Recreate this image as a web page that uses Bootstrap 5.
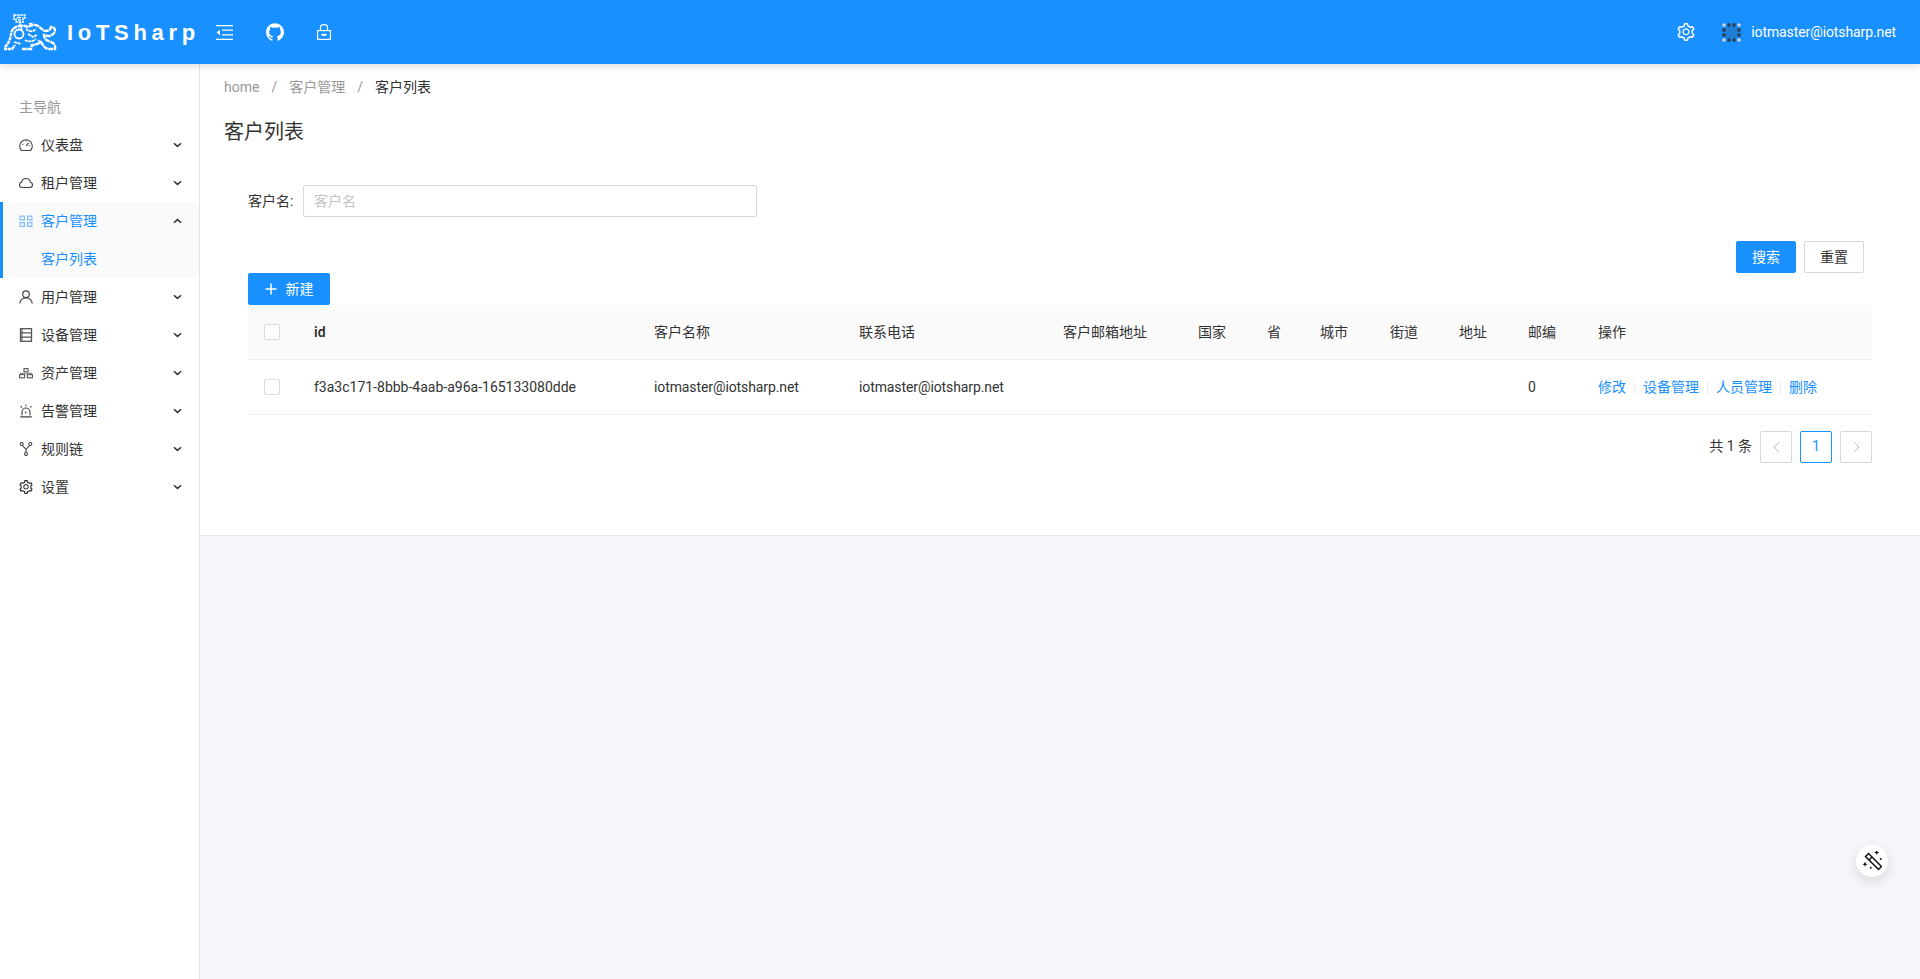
<!DOCTYPE html>
<html lang="zh-CN">
<head>
    <meta charset="UTF-8">
    <meta name="viewport" content="width=device-width, initial-scale=1.0">
    <title>客户列表 - IoTSharp</title>
    <link href="https://cdn.jsdelivr.net/npm/bootstrap@5.3.0/dist/css/bootstrap.min.css" rel="stylesheet">
    <style>
        body { font-family: Roboto, "Noto Sans CJK SC", sans-serif; font-size: 14px; color: #333; background: #f5f6fa; }
        svg { display: block; flex: none; }

        .top-bar { height: 64px; background: #1890ff; color: #fff; padding-left: 4px; padding-right: 24px; box-shadow: 0 2px 8px rgba(0, 21, 41, .15); position: relative; z-index: 2; }
        .brand-text { font-family: "Liberation Sans", sans-serif; font-weight: 700; font-size: 22px; letter-spacing: 4.7px; margin-left: 10px; width: 142px; white-space: nowrap; }
        .top-icons { gap: 33px; margin-left: 7px; }
        .top-right { gap: 27px; }
        .top-user { gap: 10px; }
        .mail-text { letter-spacing: -.1px; }

        .page-body { min-height: 915px; }
        .side-menu { width: 200px; flex: none; background: #fff; border-right: 1px solid #e4e6ea; padding-top: 28px; }
        .menu-head { height: 30px; line-height: 30px; padding-left: 19px; color: #999; margin-bottom: 4px; }
        .menu-row { height: 38px; padding-left: 19px; padding-right: 17px; color: #333; gap: 8px; }
        .menu-row .menu-label { flex: 1; }
        .menu-open { background: #fafafa; box-shadow: inset 3px 0 0 #1890ff; }
        .menu-open .menu-row { color: #1890ff; }
        .menu-open .menu-row .chev { color: #333; }
        .menu-sub { padding-left: 41px; }

        .main-col { min-width: 0; }
        .list-panel { height: 472px; background: #fff; border-bottom: 1px solid #e4e6ea; padding: 13px 48px 0 48px; }
        .crumbs { margin: 0 0 0 -24px; height: 20px; line-height: 20px; color: #999; gap: 12px; }
        .crumbs b { font-weight: 400; color: #333; }
        .page-name { font-size: 20px; font-weight: 400; line-height: 28px; margin: 21px 0 0 -24px; color: #333; }
        .filter-row { margin-top: 39px; height: 32px; gap: 9px; }
        .filter-row label { width: 46px; white-space: nowrap; }
        .filter-input { width: 454px; height: 32px; border: 1px solid #d9d9d9; border-radius: 2px; padding: 0 10px; font-size: 14px; }
        .filter-input::placeholder { color: #c4c4c4; }
        .action-row { margin-top: 24px; padding-right: 8px; gap: 8px; }
        .flat-btn { height: 32px; border-radius: 2px; font-size: 14px; padding: 0; display: flex; align-items: center; justify-content: center; }
        .btn-blue { background: #1890ff; border: 1px solid #1890ff; color: #fff; }
        .btn-plain { background: #fff; border: 1px solid #d9d9d9; color: #333; }
        .wide-60 { width: 60px; }
        .btn-new { width: 82px; gap: 9px; }

        .cust-table { table-layout: fixed; width: 100%; margin: 0; color: #333; }
        .cust-table th, .cust-table td { padding: 2px 16px 0; border-bottom: 1px solid #eceef0; vertical-align: middle; font-size: 14px; white-space: nowrap; }
        .cust-table th { height: 54px; background: #fafafa; font-weight: 400; }
        .cust-table td { height: 55px; }
        .cust-table th.id-head { font-weight: 600; }
        .tick-box { width: 16px; height: 16px; margin-top: -2px; border: 1px solid #d9d9d9; border-radius: 2px; background: #fff; display: block; }
        .row-links { color: #1890ff; gap: 8px; }
        .row-links i { width: 1px; height: 14px; background: #eceef0; display: block; }

        .pager-row { margin-top: 16px; gap: 8px; }
        .pager-box { width: 32px; height: 32px; border: 1px solid #d9d9d9; border-radius: 2px; color: #bbb; background: #fff; }
        .pager-now { border-color: #1890ff; color: #1890ff; }

        .float-wand { position: fixed; left: 1856px; top: 845px; width: 32px; height: 32px; border-radius: 50%; background: #fff; box-shadow: 0 4px 12px rgba(0, 0, 0, .12); }
    </style>
</head>
<body>
    <svg width="0" height="0" class="position-absolute">
        <symbol id="gear" viewBox="64 64 896 896"><path fill="currentColor" d="M924.8 625.7l-65.5-56c3.1-19 4.7-38.4 4.7-57.8s-1.6-38.8-4.7-57.8l65.5-56a32.03 32.03 0 009.3-35.2l-.9-2.6a443.74 443.74 0 00-79.7-137.9l-1.8-2.1a32.12 32.12 0 00-35.1-9.5l-81.3 28.9c-30-24.6-63.5-44-99.7-57.6l-15.7-85a32.05 32.05 0 00-25.8-25.7l-2.7-.5c-52.1-9.4-106.9-9.4-159 0l-2.7.5a32.05 32.05 0 00-25.8 25.7l-15.8 85.4a351.86 351.86 0 00-99 57.4l-81.9-29.1a32 32 0 00-35.1 9.5l-1.8 2.1a446.02 446.02 0 00-79.7 137.9l-.9 2.6c-4.5 12.5-.8 26.5 9.3 35.2l66.3 56.6c-3.1 18.8-4.6 38-4.6 57.1 0 19.2 1.5 38.4 4.6 57.1L99 625.5a32.03 32.03 0 00-9.3 35.2l.9 2.6c18.1 50.4 44.9 96.9 79.7 137.9l1.8 2.1a32.12 32.12 0 0035.1 9.5l81.9-29.1c29.8 24.5 63.1 43.9 99 57.4l15.8 85.4a32.05 32.05 0 0025.8 25.7l2.7.5a449.4 449.4 0 00159 0l2.7-.5a32.05 32.05 0 0025.8-25.7l15.7-85a350 350 0 0099.7-57.6l81.3 28.9a32 32 0 0035.1-9.5l1.8-2.1c34.8-41.1 61.6-87.5 79.7-137.9l.9-2.6c4.5-12.3.8-26.3-9.3-35zM788.3 465.9c2.5 15.1 3.8 30.6 3.8 46.1s-1.3 31-3.8 46.1l-6.6 40.1 74.7 63.9a370.03 370.03 0 01-42.6 73.6L721 702.8l-31.4 25.8c-23.9 19.6-50.5 35-79.3 45.8l-38.1 14.3-17.9 97a377.5 377.5 0 01-85 0l-17.9-97.2-37.8-14.5c-28.5-10.8-55-26.2-78.7-45.7l-31.4-25.9-93.4 33.2c-17-22.9-31.2-47.6-42.6-73.6l75.5-64.5-6.5-40c-2.4-14.9-3.7-30.3-3.7-45.5 0-15.3 1.2-30.6 3.7-45.5l6.5-40-75.5-64.5c11.3-26.1 25.6-50.7 42.6-73.6l93.4 33.2 31.4-25.9c23.7-19.5 50.2-34.9 78.7-45.7l37.9-14.3 17.9-97.2c28.1-3.2 56.8-3.2 85 0l17.9 97 38.1 14.3c28.7 10.8 55.4 26.2 79.3 45.8l31.4 25.8 92.8-32.9c17 22.9 31.2 47.6 42.6 73.6L781.8 426l6.5 39.9zM512 326c-97.2 0-176 78.8-176 176s78.8 176 176 176 176-78.8 176-176-78.8-176-176-176zm79.2 255.2A111.6 111.6 0 01512 614c-29.9 0-58-11.7-79.2-32.8A111.6 111.6 0 01400 502c0-29.9 11.7-58 32.8-79.2C454 401.6 482.1 390 512 390c29.9 0 58 11.6 79.2 32.8A111.6 111.6 0 01624 502c0 29.9-11.7 58-32.8 79.2z"/></symbol>
        <symbol id="chev" viewBox="0 0 10 6"><path d="M1 1l4 3.6L9 1" fill="none" stroke="currentColor" stroke-width="1.7"/></symbol>
        <symbol id="chev-up" viewBox="0 0 10 6"><path d="M1 5L5 1.4 9 5" fill="none" stroke="currentColor" stroke-width="1.7"/></symbol>
    </svg>

    <header class="top-bar d-flex align-items-center justify-content-between">
        <div class="d-flex align-items-center">
            <!-- logo: lion with a little figure on its back, origin at 4,14 -->
            <svg width="53" height="37" viewBox="0 0 53 37" fill="none" stroke="#fff">
                <path d="M10 1h11v3h-2v4h-7V5h-2z" stroke-width="1.500" stroke-dasharray="2.500 .6"/>
                <path d="M13 3.500h4M14 6h3M16 8v4" stroke-width="1.400"/>
                <path d="M9 15c-2 3-2 6-3 10-1 3-3 6-5 8v2h7l3-4" stroke-width="2.400" stroke-dasharray="3.500 .6"/>
                <path d="M9 15c4-4 11-4 15-2 3-2 7-3 10-1 3 2 5 5 8 5 3 0 5-2 5-4 2 0 4 1 4 3 0 3-3 6-7 6l-4-1c0 4 3 6 7 7 3 1 5 4 4 7h-7c-4-1-5-4-7-7-3 2-6 3-9 3l-1 4h-9" stroke-width="2.400" stroke-dasharray="5 .6"/>
                <circle cx="15" cy="20" r="4.500" stroke-width="1.800"/>
                <path d="M22 15c3 3 7 3 10 0M24 20l5 3 4-2M21 26c3 2 7 2 11-1M10 28l7 2M25 10l4-1" stroke-width="1.800" stroke-dasharray="3 .6"/>
                <path d="M34 26l3 3M17 13l1 3" stroke-width="1.500"/>
            </svg>
            <div class="brand-text">IoTSharp</div>
            <div class="top-icons d-flex align-items-center">
                <svg width="17" height="15" viewBox="0 0 17 15" fill="none" stroke="#fff" stroke-width="1.200"><path d="M0 .6h17M6 5.200h11M6 9.800h11M0 14.400h17"/><path d="M4 4.700v5.600L.6 7.500z" fill="#fff" stroke="none"/></svg>
                <svg width="18" height="18" viewBox="64 64 896 896"><path fill="#fff" d="M511.6 76.3C264.3 76.2 64 276.4 64 523.5 64 718.9 189.3 885 363.8 946c23.5 5.9 19.9-10.8 19.9-22.2v-77.5c-135.7 15.9-141.2-73.9-150.3-88.9C215 726 171.5 718 184.5 703c30.9-15.9 62.4 4 98.9 57.9 26.4 39.1 77.9 32.5 104 26 5.7-23.5 17.9-44.5 34.7-60.8-140.6-25.2-199.2-111-199.2-213 0-49.5 16.3-95 48.3-131.7-20.4-60.5 1.9-112.3 4.9-120 58.1-5.2 118.5 41.6 123.2 45.3 33-8.9 70.7-13.6 112.9-13.6 42.4 0 80.2 4.9 113.5 13.9 11.3-8.6 67.3-48.8 121.3-43.9 2.9 7.7 24.7 58.3 5.5 118 32.4 36.8 48.9 82.7 48.9 132.3 0 102.2-59 188.1-200 212.9a127.5 127.5 0 0138.1 91v112.5c.8 9 0 17.9 15 17.9 177.1-59.7 304.6-227 304.6-424.1 0-247.2-200.4-447.3-447.5-447.3z"/></svg>
                <svg width="14" height="16" viewBox="0 0 14 16" fill="none" stroke="#fff" stroke-width="1.200"><rect x=".6" y="6.600" width="12.800" height="8.800"/><path d="M3.500 6.500V3.400C3.500 1.700 5 .6 7 .6s3.500 1.100 3.500 2.800v3.100"/><rect x="4.500" y="9.800" width="5" height="2" fill="#fff" stroke="none"/></svg>
            </div>
        </div>
        <div class="top-right d-flex align-items-center">
            <svg width="18" height="18" class="text-white"><use href="#gear"/></svg>
            <div class="top-user d-flex align-items-center">
                <svg width="19" height="19" viewBox="0 0 19 19">
                    <rect x="4" y="4" width="11" height="11" fill="#1f7fd6"/>
                    <g fill="#cfd6de"><circle cx="2" cy="2" r="1.800"/><circle cx="17" cy="2" r="1.800"/><circle cx="2" cy="17" r="1.800"/><circle cx="17" cy="17" r="1.800"/></g>
                    <g fill="#2f3f55"><circle cx="7" cy="2" r="1.900"/><circle cx="12" cy="2" r="1.900"/><circle cx="7" cy="17" r="1.900"/><circle cx="12" cy="17" r="1.900"/><circle cx="2" cy="7" r="1.900"/><circle cx="17" cy="7" r="1.900"/><circle cx="2" cy="12" r="1.900"/><circle cx="17" cy="12" r="1.900"/></g>
                </svg>
                <span class="mail-text">iotmaster@iotsharp.net</span>
            </div>
        </div>
    </header>

    <div class="page-body d-flex">
        <nav class="side-menu">
            <div class="menu-head">主导航</div>
            <div class="menu-row d-flex align-items-center">
                <svg width="14" height="14" viewBox="0 0 14 14" fill="none" stroke="#444" stroke-width="1.100"><path d="M2.500 12.500A6.300 6.300 0 1 1 11.500 12.500Z"/><path d="M7 7.800l2.800-3M3.300 6.500h1M9.700 7.500h1M7 2.500v1"/></svg>
                <span class="menu-label">仪表盘</span><svg width="9" height="6" class="chev"><use href="#chev"/></svg>
            </div>
            <div class="menu-row d-flex align-items-center">
                <svg width="14" height="14" viewBox="0 0 14 14" fill="none" stroke="#444" stroke-width="1.100"><path d="M3.300 11.500C1.500 11.500.5 10.200.5 8.800c0-1.300 1-2.400 2.100-2.600C3 4 4.800 2.500 7 2.500s4 1.500 4.400 3.700c1.100.2 2.100 1.300 2.100 2.600 0 1.400-1 2.700-2.800 2.700z"/></svg>
                <span class="menu-label">租户管理</span><svg width="9" height="6" class="chev"><use href="#chev"/></svg>
            </div>
            <div class="menu-open">
                <div class="menu-row d-flex align-items-center">
                    <svg width="14" height="14" viewBox="0 0 14 14" fill="#7dbdfb"><path d="M.5 1.500h5.500v5H.5zM1.700 2.700v2.600H4.800V2.700zM8 1.500h5.500v5H8zM9.200 2.700v2.600h3.100V2.700zM.5 8h5.500v5H.5zM1.700 9.200v2.600H4.800V9.200zM8 8h5.500v5H8zM9.200 9.200v2.600h3.100V9.200z" fill-rule="evenodd"/></svg>
                    <span class="menu-label">客户管理</span><svg width="9" height="6" class="chev"><use href="#chev-up"/></svg>
                </div>
                <div class="menu-row menu-sub d-flex align-items-center">客户列表</div>
            </div>
            <div class="menu-row d-flex align-items-center">
                <svg width="14" height="14" viewBox="0 0 14 14" fill="none" stroke="#444" stroke-width="1.200"><circle cx="7" cy="4.200" r="3.300"/><path d="M.8 13.500C1 10.200 3.600 7.800 7 7.800s6 2.400 6.200 5.700"/></svg>
                <span class="menu-label">用户管理</span><svg width="9" height="6" class="chev"><use href="#chev"/></svg>
            </div>
            <div class="menu-row d-flex align-items-center">
                <svg width="14" height="14" viewBox="0 0 14 14" fill="none" stroke="#555" stroke-width="1.300"><rect x="1.500" y=".7" width="11" height="12.600"/><path d="M1.500 4.800h11M1.500 9.200h11"/><path d="M3 .7v12.600" stroke-width="1"/></svg>
                <span class="menu-label">设备管理</span><svg width="9" height="6" class="chev"><use href="#chev"/></svg>
            </div>
            <div class="menu-row d-flex align-items-center">
                <svg width="14" height="14" viewBox="0 0 14 14" fill="none" stroke="#555" stroke-width="1.100"><rect x="5" y="2.600" width="4" height="3.200"/><rect x=".6" y="8.600" width="5" height="3.200"/><rect x="8.400" y="8.600" width="5" height="3.200"/><path d="M1 7.300h12" stroke-width=".8"/></svg>
                <span class="menu-label">资产管理</span><svg width="9" height="6" class="chev"><use href="#chev"/></svg>
            </div>
            <div class="menu-row d-flex align-items-center">
                <svg width="14" height="14" viewBox="0 0 14 14" fill="none" stroke="#444" stroke-width="1.100"><path d="M3 11.500V8a4 4 0 0 1 8 0v3.500M1.200 12.900h11.600M7 .5v1.800M1.500 2.200l1.300 1.300M12.500 2.200l-1.300 1.300M6.200 7.500L7 9.500"/></svg>
                <span class="menu-label">告警管理</span><svg width="9" height="6" class="chev"><use href="#chev"/></svg>
            </div>
            <div class="menu-row d-flex align-items-center">
                <svg width="14" height="14" viewBox="0 0 14 14" fill="none" stroke="#444" stroke-width="1.100"><circle cx="2.700" cy="2" r="1.500"/><circle cx="11.300" cy="2" r="1.500"/><circle cx="7" cy="12" r="1.500"/><path d="M3.500 3.300L7 7.500l3.500-4.200M7 7.500v3"/></svg>
                <span class="menu-label">规则链</span><svg width="9" height="6" class="chev"><use href="#chev"/></svg>
            </div>
            <div class="menu-row d-flex align-items-center">
                <svg width="14" height="14" class="text-body"><use href="#gear"/></svg>
                <span class="menu-label">设置</span><svg width="9" height="6" class="chev"><use href="#chev"/></svg>
            </div>
        </nav>

        <main class="main-col flex-grow-1">
            <section class="list-panel">
                <div class="crumbs d-flex"><span>home</span><span>/</span><span>客户管理</span><span>/</span><b>客户列表</b></div>
                <h1 class="page-name">客户列表</h1>

                <form class="filter-row d-flex align-items-center">
                    <label for="custName">客户名:</label>
                    <input id="custName" class="filter-input" type="text" placeholder="客户名">
                </form>

                <div class="action-row d-flex justify-content-end">
                    <button type="button" class="flat-btn btn-blue wide-60">搜索</button>
                    <button type="button" class="flat-btn btn-plain wide-60">重置</button>
                </div>

                <button type="button" class="flat-btn btn-blue btn-new">
                    <svg width="12" height="12" viewBox="0 0 12 12" stroke="#fff" stroke-width="1.500"><path d="M6 .5v11M.5 6h11"/></svg>新建
                </button>

                <table class="table cust-table">
                    <colgroup>
                        <col style="width:50px"><col style="width:340px"><col style="width:205px"><col style="width:204px"><col style="width:135px"><col style="width:69px"><col style="width:53px"><col style="width:70px"><col style="width:69px"><col style="width:69px"><col style="width:70px"><col>
                    </colgroup>
                    <thead>
                        <tr>
                            <th><span class="tick-box"></span></th>
                            <th class="id-head">id</th>
                            <th>客户名称</th>
                            <th>联系电话</th>
                            <th>客户邮箱地址</th>
                            <th>国家</th>
                            <th>省</th>
                            <th>城市</th>
                            <th>街道</th>
                            <th>地址</th>
                            <th>邮编</th>
                            <th>操作</th>
                        </tr>
                    </thead>
                    <tbody>
                        <tr>
                            <td><span class="tick-box"></span></td>
                            <td>f3a3c171-8bbb-4aab-a96a-165133080dde</td>
                            <td><span class="mail-text">iotmaster@iotsharp.net</span></td>
                            <td><span class="mail-text">iotmaster@iotsharp.net</span></td>
                            <td></td>
                            <td></td>
                            <td></td>
                            <td></td>
                            <td></td>
                            <td></td>
                            <td>0</td>
                            <td>
                                <div class="row-links d-flex align-items-center">
                                    <span>修改</span><i></i><span>设备管理</span><i></i><span>人员管理</span><i></i><span>删除</span>
                                </div>
                            </td>
                        </tr>
                    </tbody>
                </table>

                <div class="pager-row d-flex justify-content-end align-items-center">
                    <span>共 1 条</span>
                    <span class="pager-box d-flex align-items-center justify-content-center"><svg width="7" height="12" viewBox="0 0 7 12" fill="none" stroke="currentColor"><path d="M6 1L1 6l5 5"/></svg></span>
                    <span class="pager-box pager-now d-flex align-items-center justify-content-center">1</span>
                    <span class="pager-box d-flex align-items-center justify-content-center"><svg width="7" height="12" viewBox="0 0 7 12" fill="none" stroke="currentColor"><path d="M1 1l5 5-5 5"/></svg></span>
                </div>
            </section>
        </main>
    </div>

    <div class="float-wand d-flex align-items-center justify-content-center">
        <svg width="20" height="20" viewBox="0 0 20 20"><path d="M6.500 2.500l13 13-3 3-13-13z" fill="none" stroke="#111" stroke-width="1.500"/><path d="M10 6L7 9" stroke="#111" stroke-width="1.500"/><path d="M14.700-1l.8 1.700 1.700.8-1.700.8-.8 1.700-.8-1.700-1.700-.8 1.700-.8zM3 10.800l.8 1.700 1.700.8-1.700.8-.8 1.700-.8-1.700-1.700-.8 1.700-.8zM18.700 7a1 1 0 1 1 0 2 1 1 0 0 1 0-2zM8.700 15.700a1 1 0 1 1 0 2 1 1 0 0 1 0-2z" fill="#111"/></svg>
    </div>

    <script src="https://cdn.jsdelivr.net/npm/bootstrap@5.3.0/dist/js/bootstrap.bundle.min.js"></script>
</body>
</html>
